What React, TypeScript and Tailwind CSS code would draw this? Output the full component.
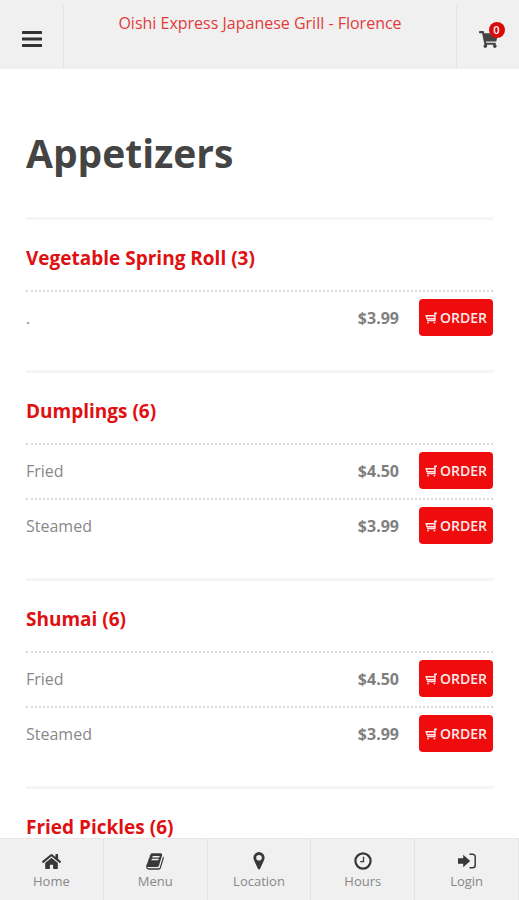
import React from "react";
import { FaHome, FaShoppingCart } from "react-icons/fa";

type Option = { name: string; price: string };
type Dish = { title: string; options: Option[] };

const dishes: Dish[] = [
  { title: "Vegetable Spring Roll (3)", options: [{ name: ".", price: "$3.99" }] },
  {
    title: "Dumplings (6)",
    options: [
      { name: "Fried", price: "$4.50" },
      { name: "Steamed", price: "$3.99" },
    ],
  },
  {
    title: "Shumai (6)",
    options: [
      { name: "Fried", price: "$4.50" },
      { name: "Steamed", price: "$3.99" },
    ],
  },
  { title: "Fried Pickles (6)", options: [] },
];

function BarsIcon() {
  return (
    <svg viewBox="0 0 20 16" className="h-4 w-5" fill="currentColor" aria-hidden="true">
      <rect width="20" height="3" rx=".5" />
      <rect y="6.500" width="20" height="3" rx=".5" />
      <rect y="13" width="20" height="3" rx=".5" />
    </svg>
  );
}

function OrderCart() {
  return (
    <svg viewBox="0 0 12 12" className="h-3 w-3" fill="none" stroke="currentColor" aria-hidden="true">
      <path d="M11.900 1.200H9.900V8.600H2" strokeWidth="1.500" />
      <path d="M.5 3.800h9.400M1.200 3.800l.9 2.900h7.600" strokeWidth="1.400" />
      <circle cx="3" cy="10.600" r=".9" fill="currentColor" stroke="none" />
      <circle cx="9.400" cy="10.600" r=".9" fill="currentColor" stroke="none" />
    </svg>
  );
}

function BookIcon() {
  return (
    <svg viewBox="0 0 1664 1792" className="h-[19px] w-[18px]" fill="currentColor" aria-hidden="true">
      <path d="M1639 478q40 57 18 129l-275 906q-19 64-76.5 107.5t-122.5 43.5h-923q-77 0-148.5-53.5t-99.5-131.5q-24-67-2-127 0-4 3-27t4-37q1-8-3-21.5t-3-19.5q2-11 8-21t16.500-23.500 16.500-23.500q23-38 45-91.500t30-91.500q3-10 .5-30t-.5-28q3-11 17-28t17-23q21-36 42-92t25-90q1-9-2.500-32t.5-28q4-13 22-30.500t22-22.500q19-26 42.500-84.500t27.500-96.500q1-8-3-25.500t-2-26.500q2-8 9-18t18-23 17-21q8-12 16.500-30.500t15-35 16-36 19.500-32 26.500-23.500 36-11.500 47.500 5.500l-1 3q38-9 51-9h761q74 0 114 56t18 130l-274 906q-36 119-71.500 153.500t-128.500 34.500h-869q-27 0-38 15-11 16-1 43 24 70 144 70h923q29 0 56-15.500t35-41.500l300-987q7-22 5-57 38 15 59 43zm-1064 2q-4 13 2 22.500t20 9.500h608q13 0 25.500-9.500t16.500-22.500l21-64q4-13-2-22.500t-20-9.500h-608q-13 0-25.500 9.500t-16.500 22.500zm-83 256q-4 13 2 22.500t20 9.500h608q13 0 25.500-9.500t16.500-22.500l21-64q4-13-2-22.500t-20-9.500h-608q-13 0-25.500 9.500t-16.500 22.500z" />
    </svg>
  );
}

function PinIcon() {
  return (
    <svg viewBox="0 0 18 18" className="h-[18px] w-[18px]" fill="currentColor" aria-hidden="true">
      <path
        fillRule="evenodd"
        d="M9 0a5.600 5.600 0 0 0-5.600 5.600c0 .9.2 1.700.5 2.400l4 8.700a1.200 1.200 0 0 0 2.200 0l4-8.700c.3-.7.5-1.500.5-2.400A5.600 5.600 0 0 0 9 0Zm0 2.900a2.800 2.800 0 1 1 0 5.600 2.800 2.800 0 0 1 0-5.600Z"
      />
    </svg>
  );
}

function ClockIcon() {
  return (
    <svg viewBox="0 0 18 18" className="h-[18px] w-[18px]" fill="none" stroke="currentColor" aria-hidden="true">
      <circle cx="9" cy="9" r="7.600" strokeWidth="2.200" />
      <path d="M9.500 4.800v4.900H6.200" strokeWidth="1.300" />
    </svg>
  );
}

function LoginIcon() {
  return (
    <svg viewBox="0 0 18 18" className="h-[18px] w-[18px]" aria-hidden="true">
      <path d="M0 6.200h5.200V2.700L12.200 9l-7 6.300v-3.500H0Z" fill="currentColor" />
      <path d="M11.500 2.200h3.200a2.500 2.500 0 0 1 2.500 2.500v8.600a2.500 2.500 0 0 1-2.500 2.500h-3.200" fill="none" stroke="currentColor" strokeWidth="1.500" />
    </svg>
  );
}

const tabs = [
  { label: "Home", icon: <FaHome size={19} /> },
  { label: "Menu", icon: <BookIcon /> },
  { label: "Location", icon: <PinIcon /> },
  { label: "Hours", icon: <ClockIcon /> },
  { label: "Login", icon: <LoginIcon /> },
];

export default function App() {
  return (
    <div className="flex h-screen flex-col bg-white font-['Open_Sans',sans-serif] text-[#808080]">
      <header className="flex h-[69px] shrink-0 bg-[#f0f0f0]">
        <button aria-label="Open menu" className="mt-1 flex w-16 items-center justify-center border-r border-[#e6e6e6] pt-1 text-[#333]">
          <BarsIcon />
        </button>
        <div className="flex-1 pt-3 text-center text-base leading-[22px] text-[#e23b3b]">
          Oishi Express Japanese Grill - Florence
        </div>
        <button aria-label="Cart, 0 items" className="mt-1 flex w-[63px] items-center justify-center border-l border-[#e6e6e6] pt-1.5 text-[#444]">
          <span className="relative">
            <FaShoppingCart size={19} />
            <span className="absolute -top-2 left-2.5 flex h-4 w-4 items-center justify-center rounded-full bg-[#d80b0b] text-[11px] font-semibold leading-4 text-white">
              0
            </span>
          </span>
        </button>
      </header>

      <main className="min-h-0 flex-1 overflow-y-auto px-[26px] [scrollbar-width:none]">
        <h1 className="pt-14 pb-9 text-[39px] font-bold leading-14 text-[#444]">Appetizers</h1>
        {dishes.map((dish) => (
          <section key={dish.title} className="border-t-3 border-[#f5f5f5] pb-[25px]">
            <h2 className="pt-[27px] pb-[21px] text-[19px] font-bold leading-[22px] text-[#e01010]">{dish.title}</h2>
            <ul>
              {dish.options.map((option) => (
                <li key={option.name} className="flex h-[55px] items-center border-t-2 border-dotted border-[#dadada] pb-0.5">
                  <span className="flex-1 text-base text-[#888]">{option.name}</span>
                  <span className="mr-5 text-base font-bold">{option.price}</span>
                  <button className="flex h-[37px] w-[74px] items-center justify-center gap-[3px] rounded bg-[#ee0c0c] text-sm font-semibold text-[#ffe9e9]">
                    <OrderCart />
                    ORDER
                  </button>
                </li>
              ))}
            </ul>
          </section>
        ))}
      </main>

      <nav className="flex h-[62px] shrink-0 border-t border-[#e8e8e8] bg-[#f0f0f0]">
        {tabs.map((tab) => (
          <a
            key={tab.label}
            href="#"
            className="flex flex-1 flex-col items-center border-r border-[#e4e4e4] pt-3 text-[13px] leading-5 text-[#888]"
          >
            <span className="flex h-5 items-center text-[#383838]">{tab.icon}</span>
            {tab.label}
          </a>
        ))}
      </nav>
    </div>
  );
}
